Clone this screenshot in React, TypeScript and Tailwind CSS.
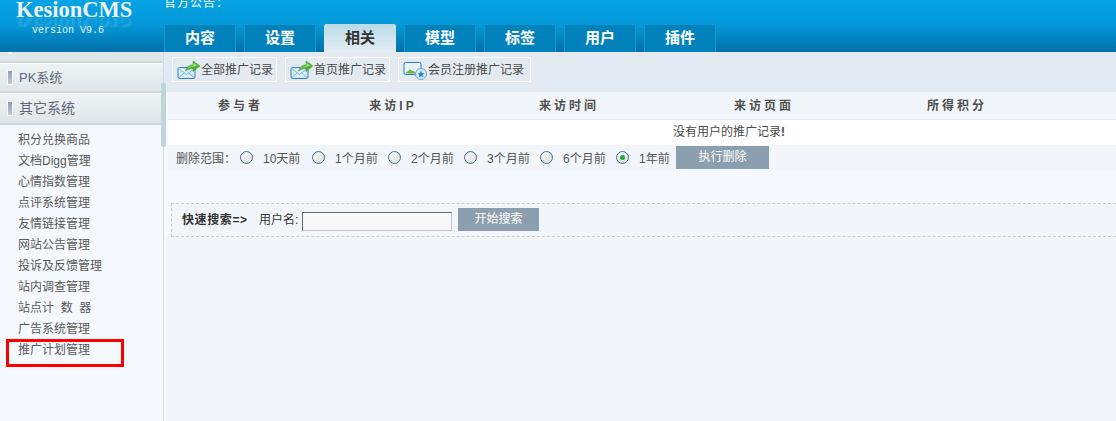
const FONT = "font-['Liberation_Sans','Noto_Sans_CJK_SC',sans-serif]";

const tabs = ["内容", "设置", "相关", "模型", "标签", "用户", "插件"];
const items = ["积分兑换商品", "文档Digg管理", "心情指数管理", "点评系统管理", "友情链接管理", "网站公告管理", "投诉及反馈管理", "站内调查管理", "站点计  数  器", "广告系统管理", "推广计划管理"];
const ranges = [
  ["10天前", "w-[43px]"],
  ["1个月前", "w-[47px]"],
  ["2个月前", "w-[47px]"],
  ["3个月前", "w-[47px]"],
  ["6个月前", "w-[47px]"],
  ["1年前", "w-[31px]"],
];
const cols = ["参与者", "来访IP", "来访时间", "来访页面", "所得积分"];

function MailIcon() {
  return (
    <svg width="24" height="20" viewBox="0 0 24 20" className="shrink-0">
      <rect x="1" y="7.5" width="17" height="11" rx="1.5" fill="#d8ecf8" stroke="#2f7fb8" />
      <path d="M1.5 8.5 L9.5 14.5 L17.5 8.5 M1.5 18 L7 13 M17.5 18 L12 13" fill="none" stroke="#7db6df" />
      <path d="M8.5 11 C10 6.5 12.5 5 16 5 L16 1 L23 6 L16 11.5 L16 8.5 C13 8.5 10.5 9.5 8.5 11 Z" fill="#4cb534" stroke="#3a9a2a" strokeWidth="0.5" />
      <path d="M10 9.5 C11.5 7 13.5 6 16.5 6 L16.5 3 L20 5.5 L16 6.8 C13.5 7 11.5 8 10 9.5 Z" fill="#b4e39a" />
    </svg>
  );
}

function PicIcon() {
  return (
    <svg width="25" height="20" viewBox="0 0 25 20" className="shrink-0">
      <rect x="1" y="2.5" width="17" height="12" rx="1.5" fill="#e6f2fa" stroke="#2f7fb8" />
      <path d="M2 13.5 L7 9.5 L11 11.5 L14 13.5 Z" fill="#6fb04a" />
      <circle cx="18" cy="14" r="5.5" fill="#d7ebf8" stroke="#6aa9d6" />
      <path d="M18 10.5 L19.1 13 L21.5 13.3 L19.7 15 L20.2 17.5 L18 16.2 L15.8 17.5 L16.3 15 L14.5 13.3 L16.9 13 Z" fill="#2f86c8" />
    </svg>
  );
}

function Radio({ checked }: { checked?: boolean }) {
  return (
    <span className="flex w-[13px] h-[13px] shrink-0 items-center justify-center rounded-full border border-[#3f6f9f] bg-gradient-to-br from-[#ffffff] to-[#d9dcd6]">
      {checked && <span className="w-[5px] h-[5px] rounded-full bg-[#22a83a]" />}
    </span>
  );
}

function SideHead({ label, h, text }: { label: string; h: string; text: string }) {
  return (
    <div className={`flex items-center ${h} ${text} text-[#5f6a78] bg-gradient-to-b from-[#eef3f6] to-[#dfe5e8] border-b-2 border-[#cfd8dc] border-t border-t-[#ffffff]`}>
      <span className="ml-2 mr-[7px] w-[4px] h-[13px] bg-gradient-to-b from-[#8d9db0] to-[#c4ccd6] outline outline-1 outline-[#f6f8fa]" />
      {label}
    </div>
  );
}

function ToolBtn({ icon, label, w }: { icon: React.ReactNode; label: string; w: string }) {
  return (
    <div className={`flex items-center h-[25px] ${w} border border-[#ffffff] pl-[4px] text-[12px] text-[#4a4a4a] whitespace-nowrap`}>
      {icon}
      <span>{label}</span>
    </div>
  );
}

export default function App() {
  return (
    <div className={`${FONT} w-[1116px] h-[421px] overflow-hidden flex flex-col bg-[#f5f8fd]`}>
      <header className="h-[52px] shrink-0 flex bg-gradient-to-b from-[#06a3e6] via-[#0497d8] to-[#006fa8]">
        <div className="w-[164px] shrink-0 pl-[16px] relative overflow-hidden">
          <div className="font-['Liberation_Serif',serif] font-bold text-[22.5px] leading-[20px] text-[#eef4f6] whitespace-nowrap">KesionCMS</div>
          <div aria-hidden="true" className="absolute left-[16px] top-[18px] h-[9px] overflow-hidden opacity-10">
            <div className="font-['Liberation_Serif',serif] font-bold text-[22.5px] leading-[20px] text-[#ffffff] scale-y-[-1] whitespace-nowrap -mt-[3px]">KesionCMS</div>
          </div>
          <div className="relative font-['Liberation_Mono',monospace] text-[10px] leading-[12px] text-[#e8f4fa] pl-[16px] mt-[5px]">version V9.6</div>
        </div>
        <div className="flex-1 flex flex-col">
          <div className="h-[24px] text-[12px] leading-[12px] text-[#ffffff] -mt-[3px] tracking-[1px]">官方公告：</div>
          <nav className="flex gap-[8px] mt-[3px]">
            {tabs.map((t) => (
              <div
                key={t}
                className={
                  t === "相关"
                    ? "w-[72px] h-[28px] rounded-t-[2px] flex items-center justify-center text-[15px] font-bold text-[#333333] bg-gradient-to-b from-[#b9d9e6] to-[#e4eef4]"
                    : "w-[72px] h-[28px] rounded-t-[2px] flex items-center justify-center text-[15px] font-bold text-[#ffffff] bg-[#0182bd] border border-b-0 border-[#0f97d0]"
                }
              >
                {t}
              </div>
            ))}
          </nav>
        </div>
      </header>

      <div className="flex-1 flex min-h-0">
        <aside className="w-[164px] shrink-0 relative border-r border-[#d3dde2] bg-[#f5f8fd]">
          <div className="h-[11px] bg-[#e0e6e9] border-b-2 border-[#cfd8dc]">
            <div className="ml-2 w-[4px] h-[2px] bg-[#f6f8fa]" />
          </div>
          <SideHead label="PK系统" h="h-[30px]" text="text-[13px]" />
          <SideHead label="其它系统" h="h-[32px]" text="text-[14px]" />
          <ul className="pt-[5px] pl-[18px] text-[12px] text-[#5a5a5a]">
            {items.map((i) => (
              <li key={i} className="h-[21px] leading-[21px] whitespace-pre">{i}</li>
            ))}
          </ul>
          <div className="absolute left-[161px] top-[31px] w-[5px] h-[64px] rounded-[2px] bg-[#bfd5dc]" />
          <div className="absolute left-[6px] top-[287px] w-[118px] h-[28px] border-[3px] border-[#ff0000]" />
        </aside>

        <main className="flex-1 min-w-0 flex flex-col">
          <div className="h-[40px] shrink-0 flex gap-[8px] pt-[5px] pl-[8px] bg-[#e4eaf2]">
            <ToolBtn icon={<MailIcon />} label="全部推广记录" w="w-[105px]" />
            <ToolBtn icon={<MailIcon />} label="首页推广记录" w="w-[105px]" />
            <ToolBtn icon={<PicIcon />} label="会员注册推广记录" w="w-[133px]" />
          </div>
          <div className="h-[28px] shrink-0 ml-[4px] pt-[1px] grid grid-cols-[145px_160px_192px_198px_188px] items-center bg-[#f2f6fb] border-b border-[#e2ebf4] text-[12px] font-bold text-[#4f4f4f] tracking-[3px]">
            {cols.map((c) => (
              <div key={c} className="text-center">{c}</div>
            ))}
          </div>
          <div className="h-[25px] shrink-0 ml-[4px] bg-[#ffffff] pl-[505px] text-[12px] leading-[25px] text-[#4a4a4a]">没有用户的推广记录<b>!</b></div>
          <div className="h-[25px] shrink-0 ml-[4px] pl-[8px] flex items-center bg-[#f2f6fb] text-[12px] text-[#555555]">
            <span className="w-[64px] pt-[2px] whitespace-nowrap">删除范围：</span>
            {ranges.map(([r, w], i) => (
              <div key={r} className="flex items-center">
                <Radio checked={i === 5} />
                <span className={`ml-[10px] mr-[6px] pt-[2px] whitespace-nowrap ${w}`}>{r}</span>
              </div>
            ))}
            <div className="w-[93px] h-[23px] flex items-center justify-center bg-[#8c9fae] text-[#ffffff] pb-[2px]">执行删除</div>
          </div>
          <div className="h-[33px] shrink-0" />
          <div className="h-[34px] shrink-0 ml-[7px] flex items-center bg-[#f2f5fa] border-y border-l border-dashed border-[#cccccc] pl-[10px] text-[12px] text-[#333333]">
            <b className="text-[12px] w-[77px] whitespace-nowrap tracking-[0.6px]">快速搜索=&gt;</b>
            <span className="w-[43px]">用户名:</span>
            <input readOnly className="w-[150px] h-[19px] mt-[3px] bg-[#f8f8fa] border border-[#c4c4c4] border-t-[#666666] border-l-[#666666]" />
            <div className="ml-[6px] w-[81px] h-[23px] -mt-[1px] flex items-center justify-center bg-[#8c9fae] text-[#ffffff] pb-[2px]">开始搜索</div>
          </div>
          <div className="flex-1 ml-[1px] bg-[#f2f5fa]" />
        </main>
      </div>
    </div>
  );
}
